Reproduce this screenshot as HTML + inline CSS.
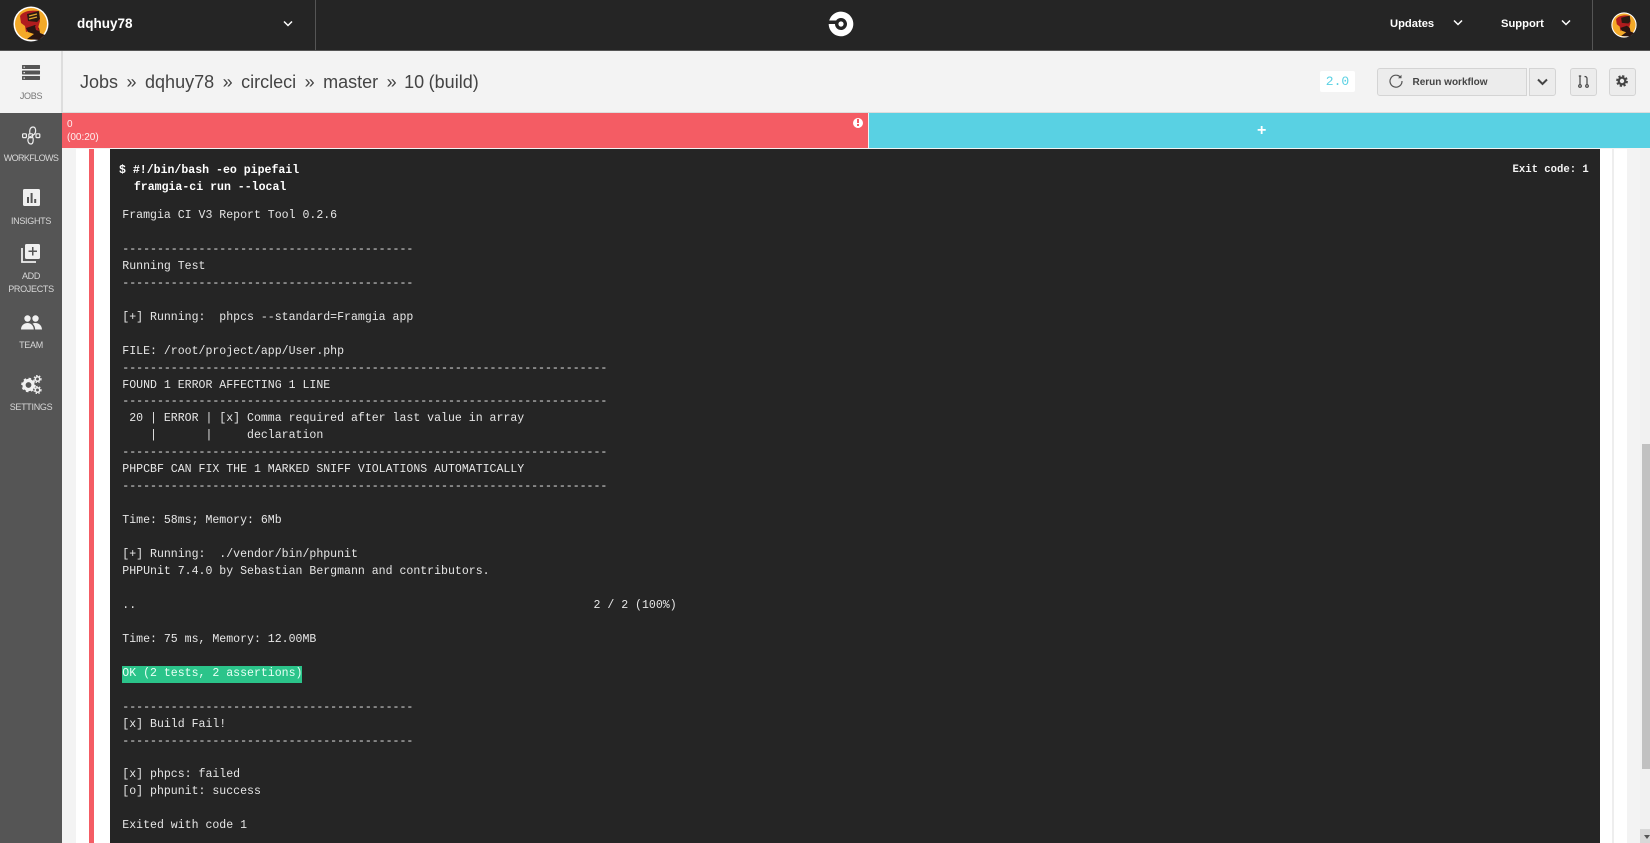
<!DOCTYPE html>
<html><head><meta charset="utf-8"><style>
html,body{margin:0;padding:0;width:1650px;height:843px;overflow:hidden;background:#f3f3f3;font-family:"Liberation Sans",sans-serif}
.a{position:absolute}
pre{margin:0;font-family:"Liberation Mono",monospace}
.nav{position:absolute;left:0;width:62px;text-align:center;color:#d8d8d8;font-size:9px;line-height:13px;letter-spacing:-.3px}
</style></head><body>
<div class="a" style="left:0;top:0;width:1650px;height:50px;background:#252525"></div>
<div class="a" style="left:0;top:50px;width:1650px;height:1px;background:#555"></div>
<div class="a" style="left:315px;top:0;width:1px;height:50px;background:#555"></div>
<div class="a" style="left:1592px;top:0;width:1px;height:50px;background:#555"></div>

<svg class="a" style="left:13px;top:6px" width="36" height="36" viewBox="0 0 36 36"><circle cx="18" cy="18" r="17.5" fill="#fff"/><circle cx="18" cy="18" r="16" fill="#f3a928"/><path d="M7 10C10 5 18 4 25 5L27 15 25 22 13 26 12 20 8 17Z" fill="#b01c1e"/><path d="M14 8L26 5 27 13 24 16 15 15Z" fill="#2b1a12"/><path d="M16 10l8-2M16 13l8-2" stroke="#e0a830" stroke-width="1.300"/><path d="M13 22L22 19 26 22 27 27 32 29 26 34 14 33 21 28 15 26Z" fill="#2a1512"/><path d="M22 20l3-1 1 6-3-1Z" fill="#b01c1e"/></svg>
<div class="a" style="left:77px;top:14px;color:#fff;font-size:13.500px;font-weight:bold;line-height:20px">dqhuy78</div>
<svg class="a" style="left:283px;top:20px" width="10" height="8"><path d="M1 1.500l4 4 4-4" fill="none" stroke="#fff" stroke-width="1.500"/></svg>

<svg class="a" style="left:828px;top:11px" width="26" height="26" viewBox="0 0 26 26"><path d="M1.200 9.500A12.300 12.300 0 1 1 .7 13H7A6 6 0 1 0 8.130 9.500Z" fill="#fff"/><circle cx="13" cy="13" r="2.600" fill="#fff"/></svg>

<div class="a" style="left:1390px;top:14px;color:#fff;font-size:11.200px;font-weight:bold;line-height:20px">Updates</div>
<svg class="a" style="left:1453px;top:19px" width="10" height="8"><path d="M1 1.500l4 4 4-4" fill="none" stroke="#fff" stroke-width="1.500"/></svg>
<div class="a" style="left:1501px;top:14px;color:#fff;font-size:11.200px;font-weight:bold;line-height:20px">Support</div>
<svg class="a" style="left:1561px;top:19px" width="10" height="8"><path d="M1 1.500l4 4 4-4" fill="none" stroke="#fff" stroke-width="1.500"/></svg>
<svg class="a" style="left:1611px;top:12px" width="26" height="26" viewBox="0 0 36 36"><circle cx="18" cy="18" r="17.500" fill="#fff"/><circle cx="18" cy="18" r="16" fill="#f3a928"/><path d="M7 10C10 5 18 4 25 5L27 15 25 22 13 26 12 20 8 17Z" fill="#b01c1e"/><path d="M14 8L26 5 27 13 24 16 15 15Z" fill="#2b1a12"/><path d="M13 22L22 19 26 22 27 27 32 29 26 34 14 33 21 28 15 26Z" fill="#2a1512"/></svg>

<!-- sidebar -->
<div class="a" style="left:0;top:113px;width:62px;height:730px;background:#555"></div>
<div class="a" style="left:61px;top:51px;width:2px;height:62px;background:#ddd"></div>
<svg class="a" style="left:21px;top:64px" width="20" height="17" viewBox="0 0 20 17" fill="#555"><rect x="1" y="1" width="18" height="4" rx=".6"/><rect x="1" y="6.500" width="18" height="4" rx=".6"/><rect x="1" y="12" width="18" height="4" rx=".6"/><g fill="#f3f3f3"><rect x="2.500" y="2.500" width="1.400" height="1.200"/><rect x="2.500" y="8" width="1.400" height="1.200"/><rect x="2.500" y="13.500" width="1.400" height="1.200"/></g></svg>
<div class="nav" style="top:89.500px;color:#777">JOBS</div>

<svg class="a" style="left:22px;top:126px" width="19" height="19" viewBox="0 0 19 19" fill="none" stroke="#eee" stroke-width="1.200"><rect x=".6" y="7.800" width="3.800" height="3.800" rx=".8"/><rect x="6.800" y="7.800" width="3.800" height="3.800" rx=".8"/><rect x="14" y="7.800" width="3.800" height="3.800" rx=".8"/><path d="M8 7.800C7 3 9 1 11 1S14 3 13.500 6C13 10 7 10 6 13C5.500 16 7 18 9 18S11.500 15 11 11.600"/></svg>
<div class="nav" style="top:151.500px;letter-spacing:-.6px">WORKFLOWS</div>

<svg class="a" style="left:23px;top:189px" width="17" height="17" viewBox="0 0 17 17"><rect width="17" height="17" rx="1.500" fill="#f0f0f0"/><path d="M4 8h2v6H4zM7.600 4h2v10h-2zM11.200 10h2v4h-2z" fill="#555"/></svg>
<div class="nav" style="top:214.500px">INSIGHTS</div>

<svg class="a" style="left:21px;top:243px" width="20" height="20" viewBox="0 0 20 20"><path d="M1 5v14h14" fill="none" stroke="#eee" stroke-width="1.800"/><rect x="4" y="1" width="15" height="15" rx="1.500" fill="#f0f0f0"/><path d="M11 4h1.500v3.500H16V9h-3.500v3.500H11V9H7.500V7.500H11Z" fill="#555"/></svg>
<div class="nav" style="top:269.500px;line-height:13.400px">ADD<br>PROJECTS</div>

<svg class="a" style="left:21px;top:315px" width="21" height="15" viewBox="0 0 21 15" fill="#f0f0f0"><circle cx="6.500" cy="3.500" r="3.200"/><circle cx="14.500" cy="3.500" r="3.200"/><path d="M0 14.500C0 10 3.500 8 6.500 8S12.500 10 12.800 14.500ZM14.200 14.500C14 12 13.200 10 11.500 8.800 12.500 8.200 13.500 8 14.500 8 17.500 8 20.800 10 21 14.500Z"/></svg>
<div class="nav" style="top:338.500px">TEAM</div>

<svg class="a" style="left:21px;top:375px" width="21" height="19" viewBox="0 0 21 19"><g fill="none" stroke="#f0f0f0"><circle cx="7.500" cy="10" r="4.500" stroke-width="3.200"/><circle cx="7.500" cy="10" r="6.400" stroke-width="1.800" stroke-dasharray="2.500 2.500"/><circle cx="16.500" cy="4" r="2.200" stroke-width="1.500"/><circle cx="16.500" cy="4" r="3.500" stroke-width="1.200" stroke-dasharray="1.500 1.500"/><circle cx="16.500" cy="15" r="2.200" stroke-width="1.500"/><circle cx="16.500" cy="15" r="3.500" stroke-width="1.200" stroke-dasharray="1.500 1.500"/></g></svg>
<div class="nav" style="top:400.500px">SETTINGS</div>

<!-- header bar -->
<div class="a" style="left:63px;top:112px;width:1587px;height:1px;background:#ddd"></div>
<div class="a" style="left:80px;top:70px;color:#444;font-size:18px;line-height:24px;white-space:pre;word-spacing:3.500px">Jobs » dqhuy78 » circleci » master » <span style="word-spacing:-.5px;margin-left:-1px">10 (build)</span></div>
<div class="a" style="left:1320px;top:71px;width:35px;height:21px;background:#fff;border-radius:2px;color:#5ad1e3;font:13px/21px 'Liberation Mono',monospace;text-align:center;">2.0</div>
<div class="a" style="left:1377px;top:68px;width:148px;height:26px;background:#ececec;border:1px solid #d4d4d4;border-radius:3px 0 0 3px"></div>
<svg class="a" style="left:1389px;top:74px" width="14" height="14" viewBox="0 0 14 14"><path d="M11.500 3.200A6 6 0 1 0 13 7" fill="none" stroke="#555" stroke-width="1.200"/><path d="M12.500 .8v3.400H9z" fill="#555"/></svg>
<div class="a" style="left:1412.500px;top:74px;color:#444;font-size:10px;font-weight:bold;line-height:18px">Rerun workflow</div>
<div class="a" style="left:1529px;top:68px;width:25px;height:26px;background:#ececec;border:1px solid #d4d4d4;border-radius:0 3px 3px 0"></div>
<svg class="a" style="left:1537px;top:78px" width="11" height="8"><path d="M1 1.500l4.500 4.500 4.500-4.500" fill="none" stroke="#444" stroke-width="2"/></svg>
<div class="a" style="left:1570px;top:68px;width:25px;height:26px;background:#ececec;border:1px solid #d4d4d4;border-radius:3px"></div>
<svg class="a" style="left:1578px;top:75px" width="11" height="13" viewBox="0 0 11 13" fill="none" stroke="#444" stroke-width="1.200"><circle cx="2" cy="11" r="1.300"/><circle cx="9" cy="11" r="1.300"/><path d="M2 9.500V1M.8 1h2.400M9 9.500V3.500C9 2 8 1.500 6.500 1.500"/></svg>
<div class="a" style="left:1609px;top:68px;width:25px;height:26px;background:#ececec;border:1px solid #d4d4d4;border-radius:3px"></div>
<svg class="a" style="left:1616px;top:75px" width="12" height="12" viewBox="0 0 12 12"><circle cx="6" cy="6" r="3.300" fill="none" stroke="#444" stroke-width="2.200"/><circle cx="6" cy="6" r="4.900" fill="none" stroke="#444" stroke-width="2" stroke-dasharray="2.200 1.650"/></svg>

<!-- status bars -->
<div class="a" style="left:62px;top:113px;width:806px;height:35px;background:#f45c64"></div>
<div class="a" style="left:869px;top:113px;width:781px;height:35px;background:#59d1e3"></div>
<div class="a" style="left:67px;top:118px;color:#fff;opacity:.9;font-size:10px;line-height:13px">0<br>(00:20)</div>
<div class="a" style="left:852.500px;top:117.500px;width:10px;height:10px;border-radius:50%;background:#fff"></div>
<div class="a" style="left:857px;top:119px;width:1.500px;height:4px;background:#f45c64"></div>
<div class="a" style="left:857px;top:124px;width:1.500px;height:1.500px;background:#f45c64"></div>
<div class="a" style="left:1257px;top:122px;color:#fff;font-size:16px;font-weight:bold;line-height:18px">+</div>

<!-- content -->
<div class="a" style="left:62px;top:149px;width:1588px;height:694px;background:#f3f3f3"></div>
<div class="a" style="left:76px;top:149px;width:34px;height:694px;background:#fff"></div>
<div class="a" style="left:89px;top:149px;width:4.500px;height:694px;background:#f45c64"></div>
<div class="a" style="left:1600px;top:149px;width:27px;height:694px;background:#fff"></div>
<div class="a" style="left:1612px;top:149px;width:2px;height:694px;background:#eee"></div>
<div class="a" style="left:1640px;top:149px;width:10px;height:694px;background:#f1f1f1"></div>
<div class="a" style="left:1642px;top:444px;width:8px;height:325px;background:#c1c1c1"></div>
<div class="a" style="left:1640px;top:829px;width:10px;height:14px;background:#d8d8d8"></div>
<div class="a" style="left:1644px;top:835px;width:0;height:0;border:3px solid transparent;border-top:4px solid #555"></div>

<div class="a" style="left:110px;top:149px;width:1490px;height:694px;background:#252525"></div>
<pre class="a" style="left:119px;top:162px;color:#fff;font-weight:bold;font-size:11.550px;line-height:17px">$ #!/bin/bash -eo pipefail
<span style="margin-left:1px">  framgia-ci run --local</span></pre>
<pre class="a" style="left:1512.500px;top:161.500px;color:#f4f4f4;font-weight:bold;font-size:10.600px;line-height:17px">Exit code: 1</pre>
<pre class="a" style="left:122.300px;top:208px;color:#e6e6e6;font-size:11.560px;line-height:16.950px">Framgia CI V3 Report Tool 0.2.6

------------------------------------------
Running Test
------------------------------------------

[+] Running:  phpcs --standard=Framgia app

FILE: /root/project/app/User.php
----------------------------------------------------------------------
FOUND 1 ERROR AFFECTING 1 LINE
----------------------------------------------------------------------
 20 | ERROR | [x] Comma required after last value in array
    |       |     declaration
----------------------------------------------------------------------
PHPCBF CAN FIX THE 1 MARKED SNIFF VIOLATIONS AUTOMATICALLY
----------------------------------------------------------------------

Time: 58ms; Memory: 6Mb

[+] Running:  ./vendor/bin/phpunit
PHPUnit 7.4.0 by Sebastian Bergmann and contributors.

..                                                                  2 / 2 (100%)

Time: 75 ms, Memory: 12.00MB

<span style="background:#2bc48a;color:#e8fff5;display:inline-block;height:16.950px;vertical-align:top">OK (2 tests, 2 assertions)</span>

------------------------------------------
[x] Build Fail!
------------------------------------------

[x] phpcs: failed
[o] phpunit: success

Exited with code 1</pre>
</body></html>
